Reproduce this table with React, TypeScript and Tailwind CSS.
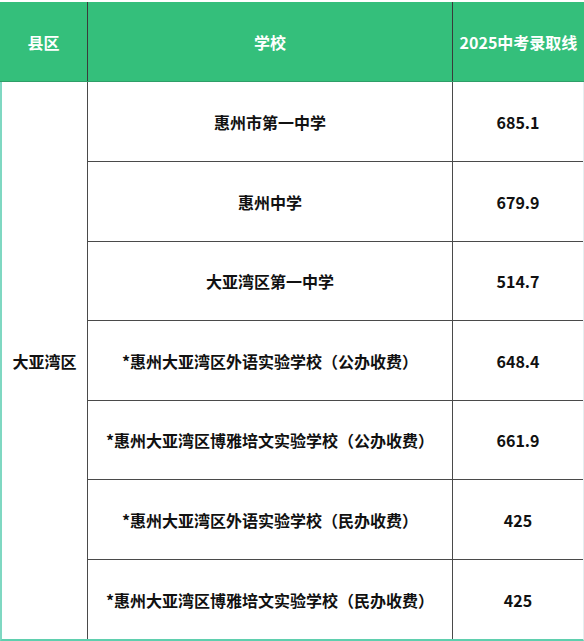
const rows = [
  { school: "惠州市第一中学", score: "685.1" },
  { school: "惠州中学", score: "679.9" },
  { school: "大亚湾区第一中学", score: "514.7" },
  { school: "*惠州大亚湾区外语实验学校（公办收费）", score: "648.4" },
  { school: "*惠州大亚湾区博雅培文实验学校（公办收费）", score: "661.9" },
  { school: "*惠州大亚湾区外语实验学校（民办收费）", score: "425" },
  { school: "*惠州大亚湾区博雅培文实验学校（民办收费）", score: "425" },
];

const heights = ["h-[80px]", "h-[80px]", "h-[79px]", "h-[80px]", "h-[79px]", "h-[80px]", "h-[79px]"];

export default function App() {
  return (
    <div
      className="w-[584px] bg-white pt-[2px] text-[16px] font-bold text-[#111]"
      style={{ fontFamily: '"Noto Sans CJK SC", "Noto Sans", sans-serif' }}
    >
      <div className="flex h-[80px] border-b border-[#2e9e68] bg-[#34bf7b] text-white">
        <div className="flex w-[88px] items-center justify-center border-r border-[#3a3a3a]">县区</div>
        <div className="flex w-[365px] items-center justify-center border-r border-[#3a3a3a]">学校</div>
        <div className="flex flex-1 items-center justify-center">2025中考录取线</div>
      </div>

      <div className="flex border-b-2 border-l-2 border-r border-b-[#5fcfae] border-l-[#7fd8c2] border-r-[#e6eef0]">
        <div className="flex w-[86px] items-center justify-center border-r border-[#4a4a4a]">大亚湾区</div>
        <div className="flex flex-1 flex-col">
          {rows.map((r, i) => (
            <div
              key={i}
              className={`flex ${heights[i]} ${i < rows.length - 1 ? "border-b border-[#4a4a4a]" : ""}`}
            >
              <div className="flex w-[365px] items-center justify-center border-r border-[#4a4a4a]">
                {r.school}
              </div>
              <div className="flex flex-1 items-center justify-center">{r.score}</div>
            </div>
          ))}
        </div>
      </div>
    </div>
  );
}
